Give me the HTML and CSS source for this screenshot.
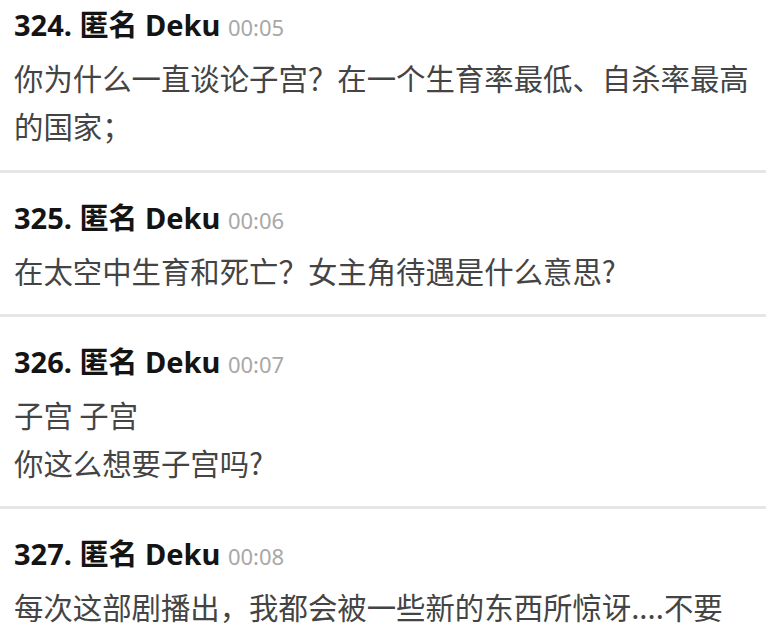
FILE: index.html
```html
<!DOCTYPE html>
<html lang="zh-CN">
<head>
    <meta charset="UTF-8">
    <meta name="viewport" content="width=device-width, initial-scale=1.0">
    <title>评论</title>
    <link rel="stylesheet" href="styles.css">
</head>
<body>
  <div class="comments">
    <div class="comment">
      <div class="comment-head">324. 匿名 Deku <span class="time">00:05</span></div>
      <div class="comment-text">你为什么一直谈论子宫？在一个生育率最低、自杀率最高的国家；</div>
    </div>
    <div class="comment">
      <div class="comment-head">325. 匿名 Deku <span class="time">00:06</span></div>
      <div class="comment-text">在太空中生育和死亡？女主角待遇是什么意思?</div>
    </div>
    <div class="comment">
      <div class="comment-head">326. 匿名 Deku <span class="time">00:07</span></div>
      <div class="comment-text">子宫 子宫<br>你这么想要子宫吗?</div>
    </div>
    <div class="comment">
      <div class="comment-head">327. 匿名 Deku <span class="time">00:08</span></div>
      <div class="comment-text">每次这部剧播出，我都会被一些新的东西所惊讶....不要</div>
    </div>
  </div>
</body>
</html>
```

FILE: styles.css
```css
body {
    margin: 0;
    background-color: #ffffff;
    font-family: "Noto Sans", "Noto Sans CJK SC", sans-serif;
}

/* 评论列表 */
.comments {
    display: flex;
    flex-direction: column;
}

.comment {
    padding: 28px 14px 20px 14px;
    border-bottom: 3px solid #e6e6e6;
}

.comment:first-child {
    padding-top: 8px;
    padding-bottom: 21px;
}

.comment-head {
    font-size: 29px;
    font-weight: bold;
    line-height: 34px;
    color: #141414;
    margin-bottom: 9px;
}

.comment-head .time {
    font-size: 22px;
    font-weight: normal;
    color: #a8a8a8;
}

.comment-text {
    font-family: "Noto Sans CJK SC", sans-serif;
    font-size: 29.4px;
    line-height: 48px;
    color: #444444;
}
```
